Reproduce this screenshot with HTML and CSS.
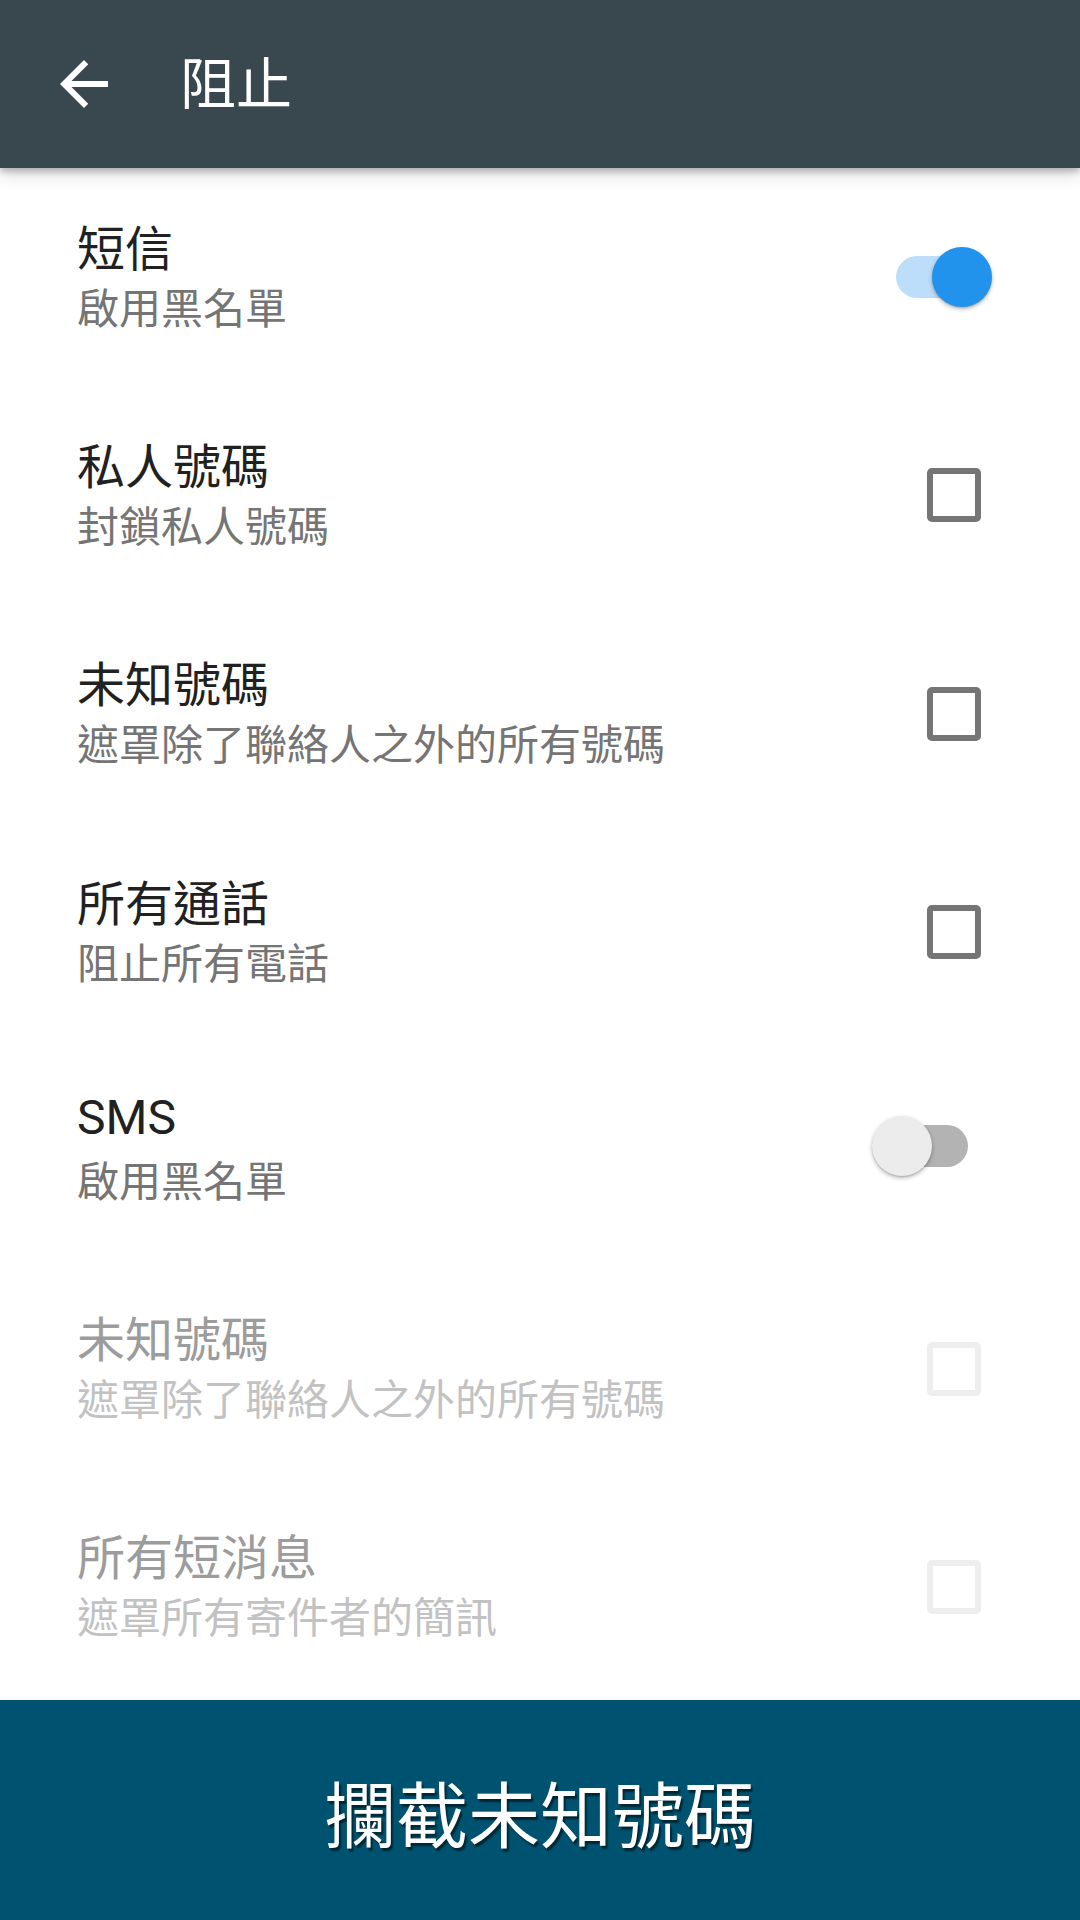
FILE: index.html
```html
<!DOCTYPE html>
<html lang="zh-Hant">
<head>
<meta charset="utf-8">
<title>阻止</title>
<link rel="stylesheet" href="styles.css">
</head>
<body>
<div class="app">
  <header class="toolbar">
    <svg class="back" viewBox="0 0 24 24" width="72" height="72"><path d="M20 11H7.83l5.59-5.59L12 4l-8 8 8 8 1.41-1.41L7.83 13H20v-2z" fill="#ffffff"/></svg>
    <div class="toolbar-title">阻止</div>
  </header>
  <main class="list">
    <div class="row">
      <div class="texts"><div class="title">短信</div><div class="summary">啟用黑名單</div></div>
      <div class="widget"><div class="switch on"><div class="track"></div><div class="thumb"></div></div></div>
    </div>
    <div class="row">
      <div class="texts"><div class="title">私人號碼</div><div class="summary">封鎖私人號碼</div></div>
      <div class="widget"><div class="checkbox"></div></div>
    </div>
    <div class="row">
      <div class="texts"><div class="title">未知號碼</div><div class="summary">遮罩除了聯絡人之外的所有號碼</div></div>
      <div class="widget"><div class="checkbox"></div></div>
    </div>
    <div class="row">
      <div class="texts"><div class="title">所有通話</div><div class="summary">阻止所有電話</div></div>
      <div class="widget"><div class="checkbox"></div></div>
    </div>
    <div class="row">
      <div class="texts"><div class="title latin">SMS</div><div class="summary">啟用黑名單</div></div>
      <div class="widget"><div class="switch off"><div class="track"></div><div class="thumb"></div></div></div>
    </div>
    <div class="row disabled">
      <div class="texts"><div class="title">未知號碼</div><div class="summary">遮罩除了聯絡人之外的所有號碼</div></div>
      <div class="widget"><div class="checkbox"></div></div>
    </div>
    <div class="row disabled">
      <div class="texts"><div class="title">所有短消息</div><div class="summary">遮罩所有寄件者的簡訊</div></div>
      <div class="widget"><div class="checkbox"></div></div>
    </div>
  </main>
  <footer class="action">攔截未知號碼</footer>
</div>
</body>
</html>
```
FILE: styles.css
```css
html, body {
  margin: 0;
  padding: 0;
  background: #ffffff;
}
body {
  font-family: Roboto, "Noto Sans CJK TC", "Noto Sans CJK SC", sans-serif;
}
.app {
  width: 1080px;
  height: 1920px;
  display: flex;
  flex-direction: column;
  overflow: hidden;
}
.toolbar {
  height: 168px;
  flex: 0 0 168px;
  background: #39474f;
  display: flex;
  align-items: center;
  padding-left: 48px;
  gap: 60px;
  position: relative;
  z-index: 2;
  box-shadow: 0 4px 6px rgba(0,0,0,0.22), 0 8px 16px rgba(0,0,0,0.12);
}
.back {
  display: block;
  flex: 0 0 72px;
}
.toolbar-title {
  color: #ffffff;
  font-size: 56px;
  line-height: 72px;
  font-family: "Noto Sans CJK TC", sans-serif;
  font-weight: 400;
  padding-bottom: 8px;
}
.list {
  flex: 1;
  display: flex;
  flex-direction: column;
}
.row {
  height: 218.3px;
  flex: 0 0 218.3px;
  display: flex;
  align-items: center;
  padding-left: 77px;
  box-sizing: border-box;
}
.texts {
  flex: 1;
  display: flex;
  flex-direction: column;
  padding-bottom: 5px;
}
.title {
  font-size: 48px;
  line-height: 62px;
  color: #212121;
  font-family: "Noto Sans CJK TC", sans-serif;
}
.title.latin {
  font-family: Roboto, "Noto Sans CJK TC", sans-serif;
}
.summary {
  font-size: 42px;
  line-height: 60px;
  color: #757575;
  font-family: "Noto Sans CJK TC", sans-serif;
}
.disabled .title { color: #9c9c9c; }
.disabled .summary { color: #c2c2c2; }
.widget {
  width: 140px;
  margin-right: 80px;
  display: flex;
  align-items: center;
}
.checkbox {
  width: 54px;
  height: 54px;
  box-sizing: border-box;
  border: 6px solid #757575;
  border-radius: 5px;
  margin-left: 67px;
}
.disabled .checkbox {
  border-color: #eeeeee;
}
.switch {
  position: relative;
  width: 96px;
  height: 60px;
  display: flex;
  align-items: center;
}
.switch .track {
  height: 42px;
  width: 84px;
  border-radius: 21px;
}
.switch .thumb {
  position: absolute;
  top: 0;
  width: 60px;
  height: 60px;
  border-radius: 50%;
  box-shadow: 0 2px 4px rgba(0,0,0,0.28), 0 1px 1px rgba(0,0,0,0.12);
}
.switch.on {
  margin-left: 36px;
}
.switch.on .track {
  background: #bcdefa;
}
.switch.on .thumb {
  right: 0;
  background: #2193ec;
}
.switch.off {
  margin-left: 12px;
  margin-bottom: 8px;
  justify-content: flex-end;
}
.switch.off .track {
  background: #b3b3b3;
}
.switch.off .thumb {
  left: 0;
  background: #ececec;
}
.action {
  flex: 0 0 220px;
  height: 220px;
  background: #005370;
  color: #ffffff;
  display: flex;
  align-items: center;
  justify-content: center;
  font-size: 72px;
  font-family: "Noto Sans CJK TC", sans-serif;
  text-shadow: 2px 3px 2px rgba(0,0,0,0.55);
  margin-top: auto;
}
```
